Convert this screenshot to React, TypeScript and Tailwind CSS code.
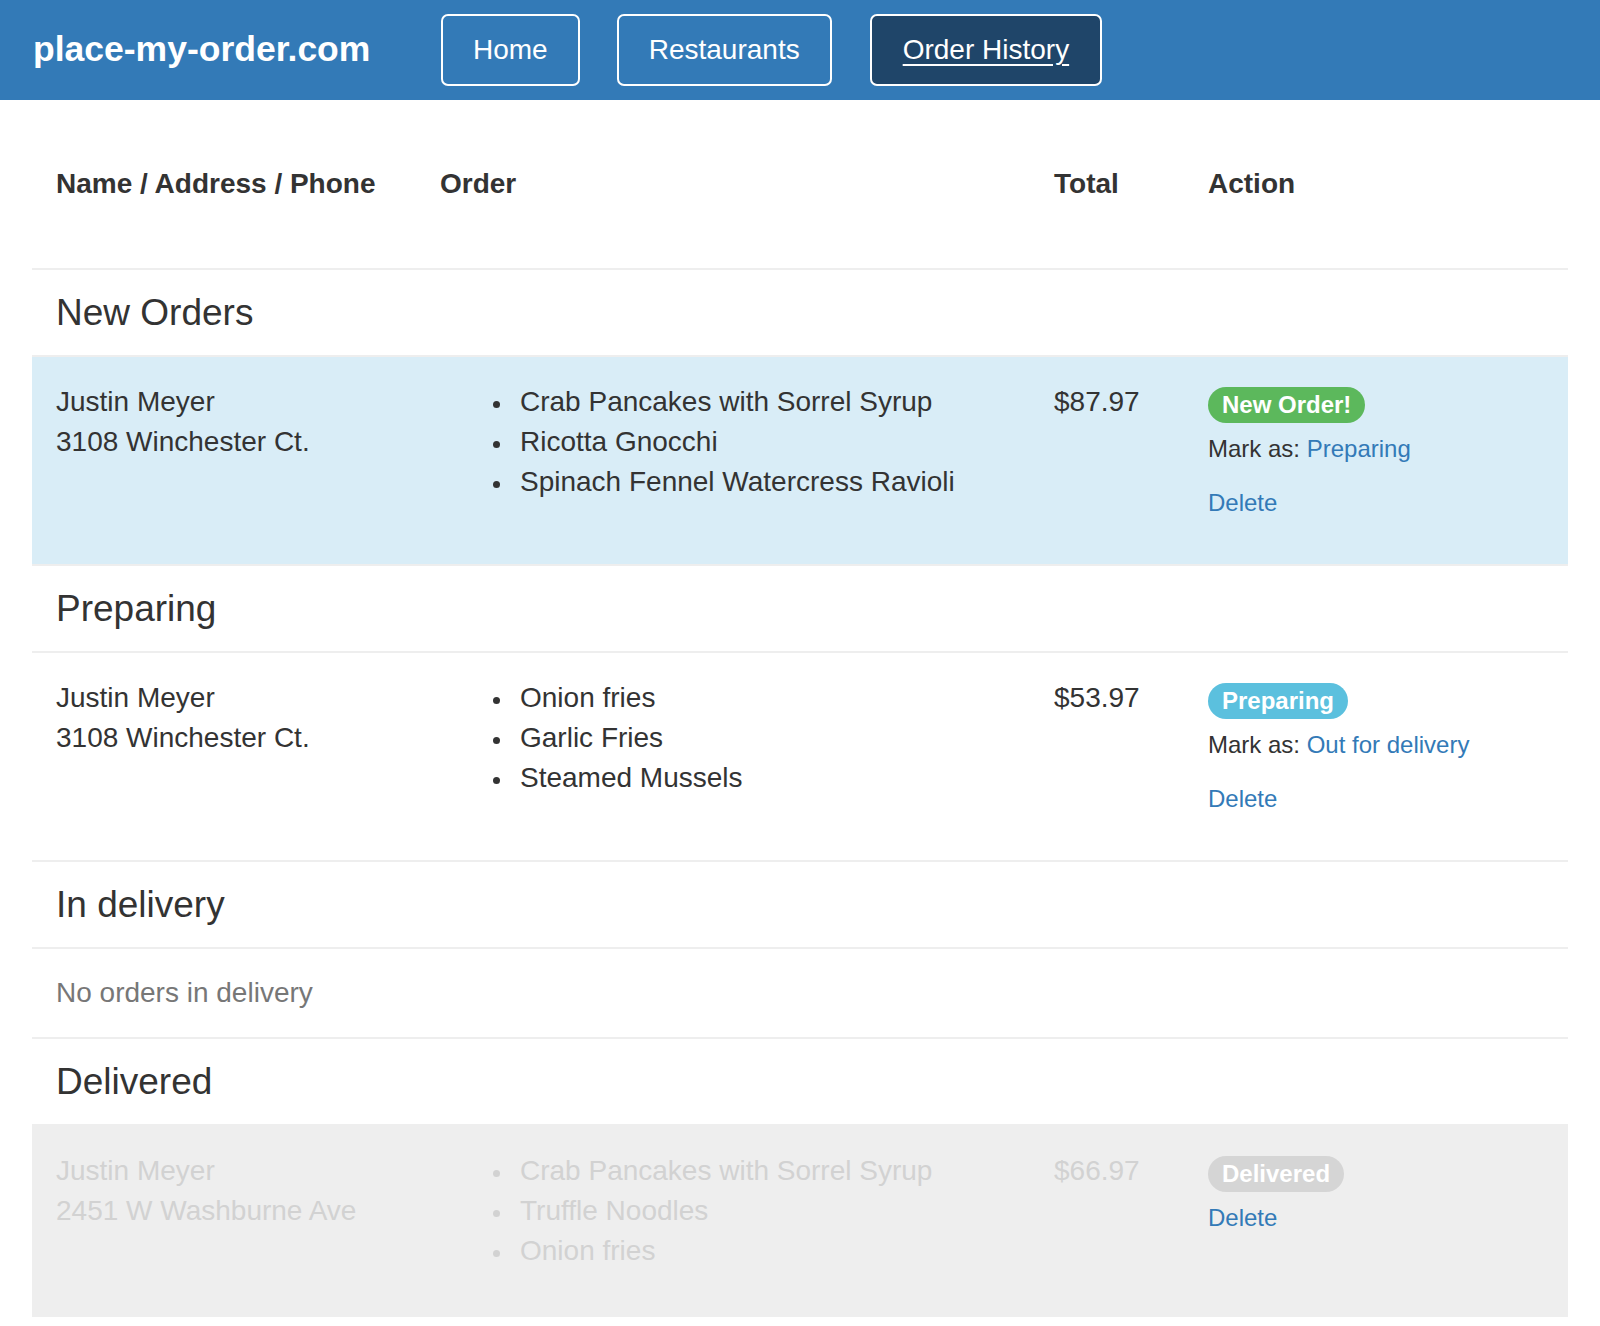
import React from "react";

type Order = {
  name: string;
  address: string;
  items: string[];
  total: string;
  status: "new" | "preparing" | "delivered";
};

const cols = "grid grid-cols-[384px_614px_154px_384px]";

function Badge({ status }: { status: Order["status"] }) {
  if (status === "new")
    return (
      <span className="inline-flex h-[36px] items-center rounded-full bg-[#5cb85c] px-[14px] text-[24px] font-bold text-white">
        New Order!
      </span>
    );
  if (status === "preparing")
    return (
      <span className="inline-flex h-[36px] items-center rounded-full bg-[#5bc0de] px-[14px] text-[24px] font-bold text-white">
        Preparing
      </span>
    );
  return (
    <span className="inline-flex h-[36px] items-center rounded-full bg-[#d5d5d5] px-[14px] text-[24px] font-bold text-white">
      Delivered
    </span>
  );
}

function OrderRow({ o }: { o: Order }) {
  const rowBg =
    o.status === "new" ? "bg-[#d9edf7]" : o.status === "delivered" ? "bg-[#eeeeee]" : "bg-white";
  const textColor = o.status === "delivered" ? "text-[#d2d2d2]" : "text-[#333333]";
  return (
    <div className={`${cols} border-t-2 border-[#eeeeee] ${rowBg} ${textColor}`}>
      <div className="px-[24px] pt-[25px] text-[28px] leading-[40px]">
        <div>{o.name}</div>
        <div>{o.address}</div>
      </div>
      <div className="px-[24px] pt-[25px] pb-[26px] text-[28px] leading-[40px]">
        <ul className="mb-[20px] list-disc pl-[74px] marker:text-[24px]">
          {o.items.map((it) => (
            <li key={it} className="pl-[6px]">
              {it}
            </li>
          ))}
        </ul>
      </div>
      <div className="px-[24px] pt-[25px] text-[28px] leading-[40px]">{o.total}</div>
      <div className="px-[24px] pt-[30px] pb-[24px]">
        <Badge status={o.status} />
        {o.status !== "delivered" && (
          <div className="mt-[9px] text-[24px] leading-[34px] text-[#333333]">
            Mark as:{" "}
            <a className="text-[#337ab7]" href="#">
              {o.status === "new" ? "Preparing" : "Out for delivery"}
            </a>
          </div>
        )}
        <div
          className={`${o.status === "delivered" ? "mt-[9px]" : "mt-[20px]"} mb-[20px] text-[24px] leading-[34px]`}
        >
          <a className="text-[#337ab7]" href="#">
            Delete
          </a>
        </div>
      </div>
    </div>
  );
}

function SectionHeading({ title }: { title: string }) {
  return (
    <div className="flex h-[87px] items-center border-t-2 border-[#eeeeee] px-[24px] text-[37px] text-[#333333]">
      {title}
    </div>
  );
}

export default function App() {
  const newOrder: Order = {
    name: "Justin Meyer",
    address: "3108 Winchester Ct.",
    items: ["Crab Pancakes with Sorrel Syrup", "Ricotta Gnocchi", "Spinach Fennel Watercress Ravioli"],
    total: "$87.97",
    status: "new",
  };
  const preparing: Order = {
    name: "Justin Meyer",
    address: "3108 Winchester Ct.",
    items: ["Onion fries", "Garlic Fries", "Steamed Mussels"],
    total: "$53.97",
    status: "preparing",
  };
  const delivered: Order = {
    name: "Justin Meyer",
    address: "2451 W Washburne Ave",
    items: ["Crab Pancakes with Sorrel Syrup", "Truffle Noodles", "Onion fries"],
    total: "$66.97",
    status: "delivered",
  };

  return (
    <div className="min-h-screen bg-white font-['Liberation_Sans',Arial,Helvetica,sans-serif] text-[#333333]">
      <header className="flex h-[100px] items-center bg-[#337ab7] px-[33px]">
        <a href="#" className="w-[408px] text-[35.5px] font-bold text-white">
          place-my-order.com
        </a>
        <nav className="flex">
          <a
            href="#"
            className="flex h-[72px] items-center rounded-[7px] border-2 border-white px-[30px] text-[28px] text-white"
          >
            Home
          </a>
          <a
            href="#"
            className="ml-[37px] flex h-[72px] items-center rounded-[7px] border-2 border-white px-[30px] text-[28px] text-white"
          >
            Restaurants
          </a>
          <a
            href="#"
            className="ml-[38px] flex h-[72px] items-center rounded-[7px] border-2 border-white bg-[#1f4569] px-[31px] text-[28px] text-white underline underline-offset-[5px]"
          >
            Order History
          </a>
        </nav>
      </header>

      <main className="px-[32px]">
        <div className={`${cols} pt-[64px] pb-[64px] text-[28px] font-bold leading-[40px]`}>
          <div className="px-[24px]">Name / Address / Phone</div>
          <div className="px-[24px]">Order</div>
          <div className="px-[24px]">Total</div>
          <div className="px-[24px]">Action</div>
        </div>

        <SectionHeading title="New Orders" />
        <OrderRow o={newOrder} />

        <SectionHeading title="Preparing" />
        <OrderRow o={preparing} />

        <SectionHeading title="In delivery" />
        <div className="border-t-2 border-[#eeeeee] px-[24px] py-[24px] text-[28px] leading-[40px] text-[#777777]">
          No orders in delivery
        </div>

        <SectionHeading title="Delivered" />
        <OrderRow o={delivered} />
      </main>
    </div>
  );
}
